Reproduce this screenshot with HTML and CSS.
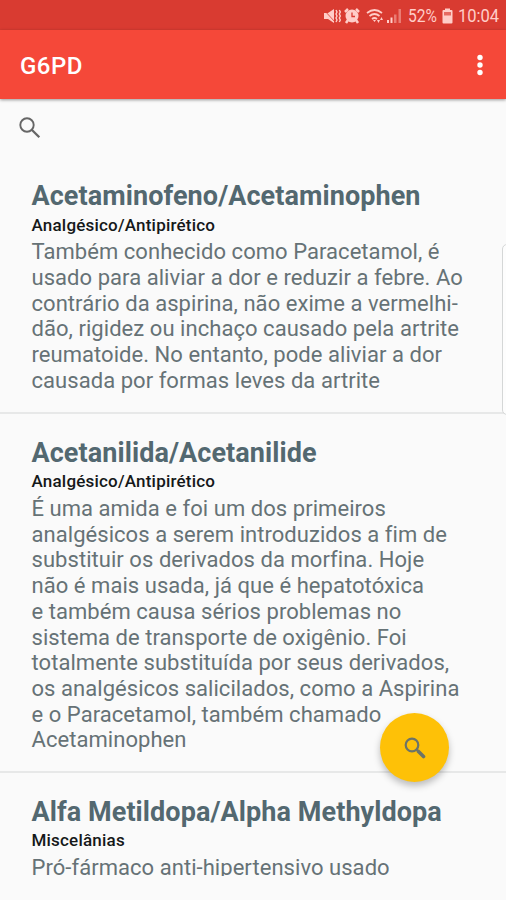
FILE: index.html
```html
<!DOCTYPE html>
<html lang="pt-BR">
<head>
<meta charset="utf-8">
<title>G6PD</title>
<link rel="stylesheet" href="styles.css">
</head>
<body>
<div class="screen">
  <header class="status">
    <svg class="mute" width="18" height="16" viewBox="0 0 18 16"><path d="M1 5h4l6-4v14l-6-4H1z" fill="currentColor"/><path d="M1 2l11 12" stroke="#d93b31" stroke-width=".8"/><path d="M13 2l1 2-1 2 1 2-1 2 1 2-1 2M16.300 2l1 2-1 2 1 2-1 2 1 2-1 2" fill="none" stroke="currentColor" stroke-width="1.400"/></svg>
    <svg class="alarm" width="16" height="16" viewBox="0 0 16 16"><path d="M1 4l3-3M15 4l-3-3M4 12l-2 3M12 12l2 3" stroke="currentColor" stroke-width="2.500"/><circle cx="8" cy="8" r="6.500" fill="currentColor"/><path d="M8 4.500v4h3" fill="none" stroke="#d93b31" stroke-width="1.300"/></svg>
    <svg class="wifi" width="19" height="16" viewBox="0 0 19 16"><path d="M1 5q7.500-6 15 0M3.500 8q5-4 10 0M6 11q2.500-2 5 0" fill="none" stroke="currentColor" stroke-width="1.700"/><path d="M7 12h3l-1.500 2zM11 12l1.500 3 1.500-3zM14 12l1.500-3 1.500 3z" fill="currentColor"/></svg>
    <svg class="signal" width="16" height="16" viewBox="0 0 16 16"><path d="M1 12h2v3H1zM4.500 9.500h2V15h-2z" fill="currentColor"/><path d="M8 6.500h2.500V15H8zM12.500 1H15v14h-2.500z" fill="currentColor" opacity=".45"/></svg>
    <span class="percent">52%</span>
    <svg class="battery" width="11" height="16" viewBox="0 0 11 16"><path d="M3 .5h5V2h1.500q1 0 1 1v11.500q0 1-1 1h-8q-1 0-1-1V3q0-1 1-1H3z" fill="currentColor"/><path d="M2 4h7v3.500H2z" fill="#e66a62"/></svg>
    <span class="clock">10:04</span>
  </header>
  <div class="appbar">
    <h1>G6PD</h1>
    <svg width="8" height="24" viewBox="0 0 8 24" fill="#fff"><circle cx="4" cy="4.500" r="2.700"/><circle cx="4" cy="12" r="2.700"/><circle cx="4" cy="19.500" r="2.700"/></svg>
  </div>
  <div class="search">
    <svg width="22" height="22" viewBox="0 0 22 22" fill="none" stroke="#666"><circle cx="8" cy="8" r="6.700" stroke-width="1.900"/><path d="M12.500 12.500l7.800 7.800" stroke-width="2.300"/></svg>
  </div>
  <main class="list">
    <article class="item">
      <h2>Acetaminofeno/Acetaminophen</h2>
      <h3>Analgésico/Antipirético</h3>
      <p>Também conhecido como Paracetamol, é<br>usado para aliviar a dor e reduzir a febre. Ao<br>contrário da aspirina, não exime a vermelhi-<br>dão, rigidez ou inchaço causado pela artrite<br>reumatoide. No entanto, pode aliviar a dor<br>causada por formas leves da artrite</p>
    </article>
    <article class="item">
      <h2>Acetanilida/Acetanilide</h2>
      <h3>Analgésico/Antipirético</h3>
      <p>É uma amida e foi um dos primeiros<br>analgésicos a serem introduzidos a fim de<br>substituir os derivados da morfina. Hoje<br>não é mais usada, já que é hepatotóxica<br>e também causa sérios problemas no<br>sistema de transporte de oxigênio. Foi<br>totalmente substituída por seus derivados,<br>os analgésicos salicilados, como a Aspirina<br>e o Paracetamol, também chamado<br>Acetaminophen</p>
    </article>
    <article class="item">
      <h2>Alfa Metildopa/Alpha Methyldopa</h2>
      <h3>Miscelânias</h3>
      <p>Pró-fármaco anti-hipertensivo usado</p>
    </article>
  </main>
  <div class="edge"></div>
  <div class="fab">
    <svg width="22" height="22" viewBox="0 0 22 22" fill="none" stroke="#6c7468"><circle cx="8" cy="8" r="6.300" stroke-width="2.200"/><path d="M12 12l2.500 2.500" stroke-width="2"/><path d="M14.500 14.500l5 5" stroke-width="3.600" stroke-linecap="round"/></svg>
  </div>
</div>
</body>
</html>
```
FILE: styles.css
```css
* { box-sizing: border-box; margin: 0; padding: 0; }
body { font-family: Roboto, "Liberation Sans", sans-serif; background: #fafafa; }
svg { display: block; flex: none; }
.screen { position: relative; width: 506px; height: 900px; overflow: hidden; display: flex; flex-direction: column; background: #fafafa; }
.status { height: 30px; flex: none; background: #d93b31; color: #ffcdc8; display: flex; align-items: center; justify-content: flex-end; padding: 1px 7px 0 0; font-size: 19px; }
.alarm { margin-left: 3px; }
.wifi { margin-left: 6px; }
.signal { margin-left: 1px; }
.percent { margin-left: 6px; width: 30px; transform: scaleX(.82); transform-origin: left; white-space: nowrap; }
.battery { margin-left: 4px; }
.clock { margin-left: 5px; width: 41px; transform: scaleX(.87); transform-origin: left; }
.appbar { height: 69px; flex: none; background: #f54839; color: #fff; display: flex; align-items: center; justify-content: space-between; padding: 0 22px 0 20px; box-shadow: 0 1px 3px rgba(0,0,0,.4); }
.appbar h1 { font-size: 24px; font-weight: 500; line-height: 30px; padding-top: 3px; letter-spacing: .5px; }
.search { height: 58px; flex: none; padding: 18px 19px 0; }
.list { height: 719px; flex: none; overflow: hidden; }
.item { padding: 23px 31.500px 18.200px; border-bottom: 2px solid #e7e8e8; }
.item h2 { height: 32.500px; font-size: 27px; line-height: 33.500px; font-weight: 700; letter-spacing: .08px; color: #536870; white-space: nowrap; }
.item h3 { font-size: 17px; line-height: 24px; font-weight: 500; letter-spacing: .2px; color: #151819; white-space: nowrap; }
.item p { margin-top: 2.800px; font-size: 22px; line-height: 25.700px; letter-spacing: .05px; color: #667276; white-space: nowrap; }
.item:last-child { height: 103px; padding-bottom: 0; border: 0; overflow: hidden; }
.item:last-child h2 { height: 31.700px; }
.edge { position: absolute; left: 502px; top: 244px; width: 10px; height: 171px; border: 1px solid #d5d7d7; border-radius: 5px; background: #fdfdfd; }
.fab { position: absolute; left: 380px; top: 713px; width: 69px; height: 69px; border-radius: 50%; background: #fec107; display: flex; align-items: center; justify-content: center; box-shadow: 0 4px 7px rgba(0,0,0,.25); }
```
